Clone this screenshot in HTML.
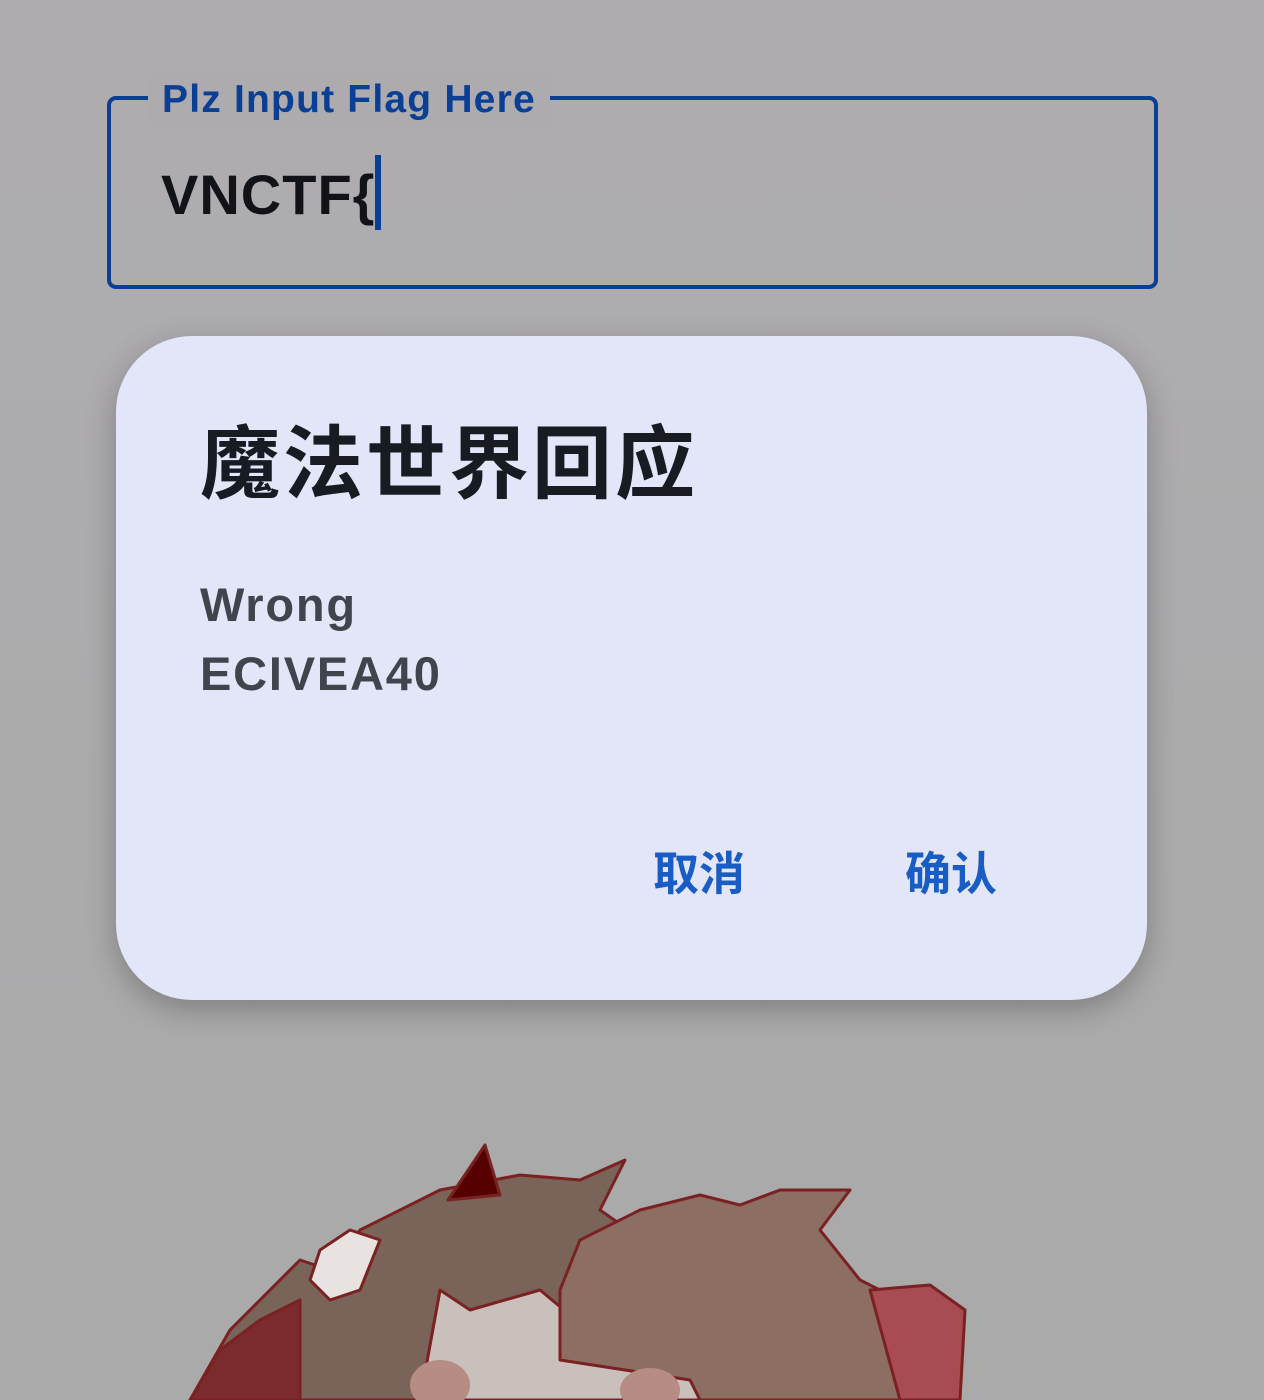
<!DOCTYPE html>
<html><head><meta charset="utf-8"><style>
html,body{margin:0;padding:0}
body{width:1264px;height:1400px;background:linear-gradient(#aeacaf,#aaaaaa);position:relative;overflow:hidden;font-family:"Liberation Sans","Noto Sans CJK SC",sans-serif}
.box{position:absolute;left:107px;top:96px;width:1043px;height:185px;border:4px solid #0b3f93;border-radius:9px}
.label{position:absolute;left:148px;top:76px;padding:0 14px;background:#adabae;color:#0b3f93;font-size:39px;font-weight:bold;line-height:48px;letter-spacing:1.2px}
.val{position:absolute;left:161px;top:160px;font-size:56px;font-weight:bold;color:#111318;line-height:70px;letter-spacing:1px}
.cur{position:absolute;left:375px;top:155px;width:6px;height:75px;background:#0b3f93}
.dlg{position:absolute;left:116px;top:336px;width:1031px;height:664px;background:#e2e6f8;border-radius:76px;box-shadow:0 10px 30px rgba(0,0,0,.25)}
.t{position:absolute;left:84px;top:72px;font-size:80px;font-weight:bold;color:#181b22;line-height:100px;letter-spacing:3px;font-family:"Noto Sans CJK SC",sans-serif}
.m{position:absolute;left:84px;top:234px;font-size:47px;font-weight:bold;color:#41444d;line-height:69px;letter-spacing:1.8px}
.b{position:absolute;top:500px;font-size:46px;font-weight:bold;color:#1a5cc6;line-height:70px;font-family:"Noto Sans CJK SC",sans-serif}
</style></head><body>
<div class="box"></div>
<div class="label">Plz Input Flag Here</div>
<div class="val">VNCTF{</div>
<div class="cur"></div>
<svg style="position:absolute;left:0;top:1100px" width="1264" height="300" viewBox="0 1100 1264 300">
<g stroke="#7a2222" stroke-width="3" stroke-linejoin="round">
<path d="M420 1400 L440 1290 L560 1260 L690 1290 L700 1400 Z" fill="#c9c0bc"/>
<path d="M190 1400 L230 1330 L260 1300 L300 1260 L330 1270 L360 1230 L440 1190 L520 1175 L580 1180 L625 1160 L600 1210 L650 1245 L620 1300 L600 1340 L540 1290 L470 1310 L440 1290 L420 1400 Z" fill="#7a6358"/>
<path d="M485 1145 L500 1195 L448 1200 Z" fill="#560000"/>
<path d="M560 1290 L580 1240 L640 1210 L700 1195 L740 1205 L780 1190 L850 1190 L820 1230 L860 1280 L900 1300 L960 1400 L700 1400 L690 1380 L560 1360 Z" fill="#8c6e63"/>
<path d="M870 1290 L930 1285 L965 1310 L960 1400 L900 1400 Z" fill="#a84b52"/>
<path d="M190 1400 L220 1350 L260 1320 L300 1300 L300 1400 Z" fill="#7b2b2e"/>
<path d="M320 1250 L350 1230 L380 1240 L360 1290 L330 1300 L310 1280 Z" fill="#e8e2e0"/>
</g>
<ellipse cx="440" cy="1385" rx="30" ry="25" fill="#b68c85"/>
<ellipse cx="650" cy="1390" rx="30" ry="22" fill="#b68c85"/>
</svg>
<div class="dlg">
<div class="t">魔法世界回应</div>
<div class="m">Wrong<br>ECIVEA40</div>
<div class="b" style="left:537px">取消</div>
<div class="b" style="left:789px">确认</div>
</div>
</body></html>
